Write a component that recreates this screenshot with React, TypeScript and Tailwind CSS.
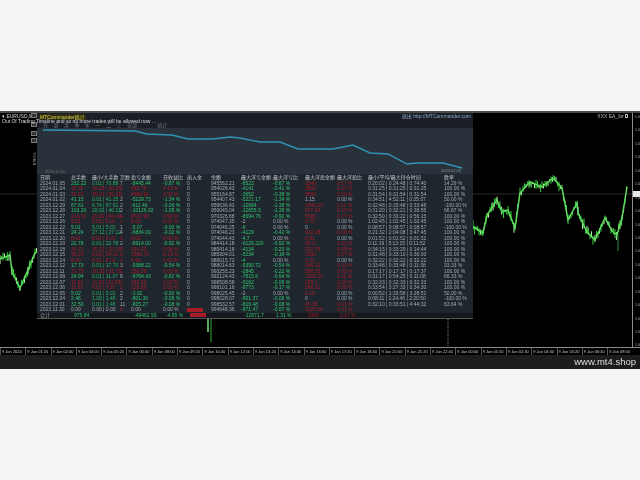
type Row = string[];

const rows: Row[] = [
  ['2024.01.05', '232.22', '0.01 | 70.88', '7', '-8445.44', '-0.87 %', '0', '945562.21', '-8523', '-0.87 %', '3240', '0.17 %', '0:20:02 | 0:24:48 | 0:74:40', '14.29 %'],
  ['2024.01.04', '30.25', '30.25 | 30.25', '1', '650.76', '0.13 %', '0', '954026.43', '-4141', '-0.41 %', '3863', '0.17 %', '0:31:25 | 0:31:25 | 0:31:25', '100.00 %'],
  ['2024.01.03', '30.21', '30.21 | 30.21', '1', '4986.91', '0.52 %', '0', '955164.87', '-3652', '-0.38 %', '5860', '0.10 %', '0:31:54 | 0:31:54 | 0:31:54', '100.00 %'],
  ['2024.01.02', '41.15', '0.01 | 41.15', '2', '-5229.73', '-1.34 %', '0', '954407.43', '-5221.17', '-1.34 %', '1.15', '0.00 %', '0:34:51 | 4:52:11 | 0:35:37', '50.00 %'],
  ['2023.12.29', '67.61', '6.74 | 67.61', '2', '-611.46', '-0.06 %', '0', '959636.43', '-12684', '-1.38 %', '1990.23', '0.11 %', '0:32:48 | 0:33:48 | 0:33:48', '-100.00 %'],
  ['2023.12.28', '103.20', '20.02 | 40.11', '2', '-10126.02', '-1.05 %', '0', '959045.04', '-12655.3', '-1.38 %', '977.24', '0.15 %', '0:31:20 | 0:32:21 | 0:38:55', '66.67 %'],
  ['2023.12.27', '214.01', '20.02 | 94.19', '4', '8703.96', '0.90 %', '0', '970326.68', '-8694.76', '-0.90 %', '5560', '0.17 %', '0:32:50 | 0:33:22 | 0:56:15', '100.00 %'],
  ['2023.12.26', '5.01', '5.01 | 5.01', '1', '5.02', '0.00 %', '0', '974047.35', '-2', '0.00 %', '0.72', '0.00 %', '1:02:45 | 1:02:45 | 1:02:45', '100.00 %'],
  ['2023.12.22', '5.01', '5.01 | 5.01', '1', '-5.07', '-0.00 %', '0', '974046.25', '-6', '0.00 %', '0', '0.00 %', '0:08:57 | 0:08:57 | 0:08:57', '-100.00 %'],
  ['2023.12.21', '24.24', '27.12 | 27.12', '4', '-6834.09', '-0.02 %', '0', '974046.23', '-4129', '-0.42 %', '922.28', '0.08 %', '0:21:32 | 2:04:08 | 3:47:45', '100.00 %'],
  ['2023.12.20', '8.01', '8.01 | 8.01', '1', '0.02', '0.00 %', '0', '974044.43', '-4.7', '0.00 %', '0.81', '0.00 %', '0:01:52 | 0:01:52 | 0:01:52', '100.00 %'],
  ['2023.12.19', '22.78', '0.01 | 22.78', '2', '-6914.00', '-0.92 %', '0', '984414.18', '-6129.220', '-0.92 %', '40.3', '0.21 %', '0:11:19 | 5:13:15 | 0:11:52', '100.00 %'],
  ['2023.12.18', '30.21', '30.21 | 20.15', '3', '914.25', '0.08 %', '0', '985414.18', '-4134', '-0.20 %', '522.76', '0.09 %', '0:34:15 | 0:33:29 | 0:14:44', '100.00 %'],
  ['2023.12.15', '98.01', '8.01 | 24.16', '2', '1888.70', '0.19 %', '0', '985904.01', '-5234', '-0.18 %', '1932', '0.17 %', '0:31:48 | 0:33:10 | 0:36:00', '100.00 %'],
  ['2023.12.14', '8.00', '8.01 | 8.01', '1', '0.54', '0.00 %', '0', '988015.72', '-4', '0.00 %', '1.01', '0.00 %', '0:32:22 | 0:32:22 | 0:32:22', '100.00 %'],
  ['2023.12.12', '17.73', '0.01 | 17.70', '3', '-5388.22', '-0.54 %', '0', '988014.63', '-5390.72', '-0.54 %', '356.22', '0.03 %', '0:33:48 | 0:33:48 | 0:11:38', '33.33 %'],
  ['2023.12.11', '31.75', '30.35 | 31.75', '1', '258.29', '0.03 %', '0', '993255.23', '-2845', '-0.22 %', '595.25', '0.06 %', '0:17:17 | 0:17:17 | 0:17:37', '100.00 %'],
  ['2023.12.08', '24.94', '0.01 | 11.07', '6', '-6764.43', '-0.82 %', '0', '992124.43', '-7815.6', '-0.64 %', '1908.21', '0.11 %', '0:31:17 | 0:54:25 | 0:11:08', '66.33 %'],
  ['2023.12.07', '11.93', '11.93 | 11.93', '1', '182.03', '0.03 %', '0', '998508.58', '-6182', '-0.08 %', '288.1', '0.04 %', '0:32:33 | 0:32:33 | 0:32:33', '100.00 %'],
  ['2023.12.06', '11.86', '4.01 | 7.87', '2', '126.68', '0.03 %', '0', '998101.16', '-8773', '-0.17 %', '586.31', '0.05 %', '0:33:54 | 0:27:33 | 0:34:30', '100.00 %'],
  ['2023.12.05', '5.02', '0.01 | 5.01', '2', '-3.02', '-0.00 %', '0', '998025.45', '-2', '0.00 %', '0.18', '0.00 %', '0:00:52 | 1:33:58 | 3:28:51', '50.00 %'],
  ['2023.12.04', '2.46', '1.00 | 1.46', '2', '-801.36', '-0.08 %', '0', '998028.07', '-801.37', '-0.08 %', '0', '0.00 %', '0:08:11 | 1:24:46 | 2:20:50', '-100.00 %'],
  ['2023.12.01', '32.50', '0.01 | 1.46', '11', '-815.27', '-0.08 %', '0', '998532.57', '-816.48', '-0.08 %', '45.35', '0.01 %', '0:32:10 | 0:33:51 | 4:44:32', '63.64 %'],
  ['2023.11.30', '0.00', '0.00 | 0.00', '0', '0.00', '0.00 %', 'box', '994648.36', '-871.47', '-0.07 %', '1120.54', '0.21 %', '', ''],
];

const headers = ['日期', '总手数', '最小/大手数', '次数', '盈亏金额', '日收益比', '出入金', '余额', '最大浮亏金额', '最大浮亏比', '最大浮盈金额', '最大浮盈比', '最小/平均/最大持仓时间', '胜率'];
const tabs = ['日', '周', '月', '季', '年', '一', '二', '三', '全部'];
const timeLabels = ['9 Jan 2024', '9 Jan 01:20', '9 Jan 02:40', '9 Jan 04:00', '9 Jan 05:20', '9 Jan 06:40', '9 Jan 08:00', '9 Jan 09:20', '9 Jan 10:40', '9 Jan 12:00', '9 Jan 13:20', '9 Jan 14:40', '9 Jan 16:00', '9 Jan 17:20', '9 Jan 18:40', '9 Jan 20:00', '9 Jan 21:20', '9 Jan 22:40', '9 Jan 00:00', '9 Jan 01:20', '9 Jan 02:40', '9 Jan 04:00', '9 Jan 05:20', '9 Jan 06:40', '9 Jan 08:00'];
const prices = Array.from({ length: 18 }, (_, i) => i);

// plot coordinates: y is relative to the top of the plot (page y - 113)
const rightCurve = [[473, 114], [483, 120], [487, 102], [497, 87], [502, 99], [508, 97], [515, 115], [520, 80], [530, 69], [542, 74], [553, 65], [562, 75], [568, 107], [577, 90], [578, 100], [587, 119], [595, 127], [605, 105], [612, 118], [617, 122], [622, 105], [627, 74]];
const leftCurve = [[0, 146], [10, 142], [12, 159], [20, 175], [28, 157], [35, 140], [38, 138]];
const equity = [[6, 2], [98, 3], [110, 6], [135, 7], [151, 11], [176, 11], [193, 9], [203, 10], [223, 14], [243, 14], [261, 21], [296, 21], [316, 17], [333, 25], [351, 26], [370, 36], [380, 35], [406, 35], [425, 40]];

function candles(curve: number[][], seed: number) {
  const out: number[][] = [];
  let s = seed;
  const next = () => {
    s = (s * 9301 + 49297) % 233280;
    return s / 233280;
  };
  for (let i = 0; i < curve.length - 1; i++) {
    const [x1, y1] = curve[i];
    const [x2, y2] = curve[i + 1];
    for (let x = x1; x < x2; x += 1.5) {
      const y = y1 + ((y2 - y1) * (x - x1)) / (x2 - x1) + (next() - 0.5) * 5;
      const h = 1 + next() * 4;
      out.push([x, y - h, y + h]);
    }
  }
  return out;
}

const toPoints = (curve: number[][]) => curve.map((p) => p.join(',')).join(' ');

function cellColor(col: number, row: Row) {
  if (col === 1 || col === 2 || col === 4 || col === 5) {
    if (row[4].startsWith('-')) return col === 2 ? 'text-[#27b567]' : 'text-[#2fc46f]';
    if (row[4] === '0.00') return 'text-[#a3abb2]';
    return 'text-[#a81c2a]';
  }
  if (col === 3) return row[4].startsWith('-') ? 'text-[#a3abb2]' : 'text-[#a81c2a]';
  if (col === 8 || col === 9) return row[col] === '-2' || row[col] === '0.00 %' ? 'text-[#a3abb2]' : 'text-[#2fc46f]';
  if (col === 10 || col === 11) return row[col].startsWith('0.00') || row[col] === '0' || row[col] === '1.15' ? 'text-[#a3abb2]' : 'text-[#a81c2a]';
  return 'text-[#a3abb2]';
}

function TableRow({ row }: { row: Row }) {
  return (
    <div className="grid h-[5.5px] grid-cols-[31px_21px_28px_11px_32px_24px_24px_30px_32px_32px_32px_31px_76px_26px] leading-[5.5px] whitespace-nowrap">
      {row.map((cell, i) =>
        cell === 'box' ? (
          <span key={i} className="h-[4px] w-[16px] self-center bg-[#a81c2a]" />
        ) : (
          <span key={i} className={cellColor(i, row)}>{cell}</span>
        ),
      )}
    </div>
  );
}

export default function App() {
  return (
    <div className="flex h-[480px] w-[640px] flex-col overflow-hidden bg-[#f3f5f7] font-['Liberation_Sans','Noto_Sans_CJK_SC',sans-serif]">
      <div className="h-[111px]" />
      <div className="flex h-[258px] flex-col border-t-2 border-[#4a4a4a] bg-black blur-[0.4px]">
        <div className="flex h-[234px]">
          {/* plot */}
          <div className="relative flex-1">
            <svg width="632" height="234" className="absolute left-0 top-0">
              <line x1="0" y1="81" x2="632" y2="81" stroke="#2b2b2b" strokeWidth="1" />
              {[...candles(leftCurve, 11), ...candles(rightCurve, 47)].map(([x, a, b], i) => (
                <line key={i} x1={x} y1={a} x2={x} y2={b} stroke={i % 3 === 0 ? '#a8eca8' : '#33c23a'} strokeWidth="1.1" />
              ))}
              <polyline points={toPoints(leftCurve)} fill="none" stroke="#5fdc5f" strokeWidth="1.5" />
              <polyline points={toPoints(rightCurve)} fill="none" stroke="#5fdc5f" strokeWidth="1.5" />
              <line x1="618" y1="122" x2="618" y2="138" stroke="#3a8a3a" />
              <line x1="208" y1="205" x2="208" y2="219" stroke="#7fdc7f" strokeWidth="1.5" />
              <line x1="211" y1="205" x2="211" y2="229" stroke="#2fae35" strokeWidth="1" />
              <line x1="448" y1="206" x2="448" y2="233" stroke="#888" strokeWidth="1" strokeDasharray="1 1" />
            </svg>

            <div className="absolute left-[2px] top-0 text-[5px] leading-[6px] text-[#d8d8d8]">▾ EURUSD,M5</div>
            <div className="absolute right-[4px] top-0 flex items-center gap-[1px] text-[5px] leading-[6px] text-[#bbb]">
              XXX EA_for
              <span className="h-[4px] w-[3px] border border-[#bbb]" />
            </div>

            {/* side buttons */}
            {[0, 9, 18, 25].map((top) => (
              <span key={top} className="absolute left-[31px] h-[5px] w-[6px] border border-[#777] bg-[#333]" style={{ top }} />
            ))}
            <span className="absolute left-[32px] top-[38px] h-[14px] rotate-180 text-[4px] leading-[5px] text-[#aaa] [writing-mode:vertical-rl]">ETH/%</span>

            {/* stats window */}
            <div className="absolute left-[37px] top-0 flex h-[206px] w-[436px] flex-col bg-[#1f262d] text-[5px] text-[#a3abb2]">
              <div className="h-[15px] bg-[#1a1f25]">
                <div className="flex h-[7px] items-center justify-between px-[2px]">
                  <span className="bg-[#2a2a12] px-[1px] leading-[6px] text-[#e4d84a]">MTCommander统计</span>
                  <span className="text-[#8fa5c8]">退出 http://MTCommander.com</span>
                </div>
                <div className="flex h-[8px] items-end pb-[1px] pl-[6px] leading-[4px] text-[#6d757c]">
                  {tabs.map((t) => (
                    <span key={t} className="w-[10.5px]">{t}</span>
                  ))}
                  <span className="ml-[20px]">统计</span>
                </div>
              </div>

              <div className="relative h-[46px] bg-[#29323a]">
                <svg width="436" height="46" className="absolute left-0 top-0">
                  <polyline points={toPoints(equity)} fill="none" stroke="#2f93b8" strokeWidth="1.4" />
                </svg>
                <span className="absolute bottom-0 left-[8px] text-[4px] leading-[5px] text-[#6d757c]">2023.11.30</span>
                <span className="absolute bottom-[1px] right-[12px] text-[4px] leading-[5px] text-[#8d959c]">2024.01.05</span>
              </div>

              <div className="flex flex-1 flex-col pl-[3px]">
                <div className="grid h-[6.5px] grid-cols-[31px_21px_28px_11px_32px_24px_24px_30px_32px_32px_32px_31px_76px_26px] leading-[6.5px] whitespace-nowrap text-[#c2c8cd]">
                  {headers.map((h) => (
                    <span key={h}>{h}</span>
                  ))}
                </div>
                {rows.map((row) => (
                  <TableRow key={row[0]} row={row} />
                ))}
                <div className="-ml-[3px] grid h-[6px] grid-cols-[34px_21px_28px_11px_32px_24px_24px_30px_32px_32px_32px_31px] border-b border-[#555] bg-[#14181c] pl-[3px] leading-[5.5px] whitespace-nowrap">
                  <span>合计</span>
                  <span className="text-[#2fc46f]">975.84</span>
                  <span />
                  <span />
                  <span className="text-[#2fc46f]">-49462.93</span>
                  <span className="text-[#2fc46f]">-4.95 %</span>
                  <span className="h-[4px] w-[16px] self-center bg-[#a81c2a]" />
                  <span />
                  <span className="text-[#2fc46f]">-12871.7</span>
                  <span className="text-[#2fc46f]">1.31 %</span>
                  <span className="text-[#a81c2a]">3300</span>
                  <span className="text-[#a81c2a]">0.17 %</span>
                </div>
              </div>
            </div>

            {/* sits on top of the window, as in the terminal */}
            <div className="absolute left-[2px] top-[6px] whitespace-nowrap text-[5px] leading-[4px] text-[#d8d8d8]">
              Out Of Trading Timeline and so no more trades will be allowed now ...
            </div>
          </div>

          {/* price axis */}
          <div className="relative w-[8px] overflow-hidden border-l border-[#8a8a8a] pl-[2px] pt-[1px]">
            {prices.map((p) => (
              <div key={p} className="h-[13.45px] text-[3.5px] leading-[6px] text-[#bbb]">1.0</div>
            ))}
            <div className="absolute left-0 top-[78px] h-[6px] w-[8px] bg-[#e8e8e8]" />
          </div>
        </div>

        {/* time axis */}
        <div className="flex h-[8px] overflow-hidden border-t border-[#8a8a8a] text-[4px] leading-[7px] text-[#c8c8c8]">
          {timeLabels.map((t, i) => (
            <span key={i} className="w-[25.3px] shrink-0 whitespace-nowrap border-l border-[#555] pl-[1px]">{t}</span>
          ))}
        </div>

        {/* watermark strip */}
        <div className="flex h-[14px] items-center justify-end bg-[#1d1d1d] pr-[4px] text-[9.5px] text-[#dcdcdc]">
          www.mt4.shop
        </div>
      </div>
    </div>
  );
}
